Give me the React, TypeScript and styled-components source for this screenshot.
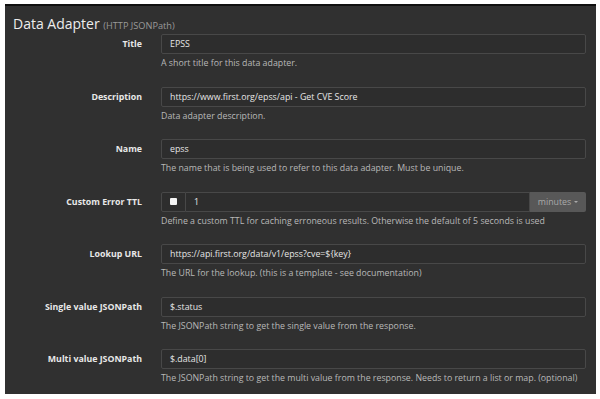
import React from "react";
import styled, { createGlobalStyle } from "styled-components";

interface Field {
  label: string;
  value: string;
  help: string;
}

const fields: Field[] = [
  { label: "Title", value: "EPSS", help: "A short title for this data adapter." },
  {
    label: "Description",
    value: "https://www.first.org/epss/api - Get CVE Score",
    help: "Data adapter description.",
  },
  {
    label: "Name",
    value: "epss",
    help: "The name that is being used to refer to this data adapter. Must be unique.",
  },
];

const lookupFields: Field[] = [
  {
    label: "Lookup URL",
    value: "https://api.first.org/data/v1/epss?cve=${key}",
    help: "The URL for the lookup. (this is a template - see documentation)",
  },
  {
    label: "Single value JSONPath",
    value: "$.status",
    help: "The JSONPath string to get the single value from the response.",
  },
  {
    label: "Multi value JSONPath",
    value: "$.data[0]",
    help: "The JSONPath string to get the multi value from the response. Needs to return a list or map. (optional)",
  },
];

const FieldRow = ({ field }: { field: Field }) => (
  <Row>
    <Label>{field.label}</Label>
    <Control>
      <Input>{field.value}</Input>
      <Help>{field.help}</Help>
    </Control>
  </Row>
);

export default function App() {
  return (
    <>
      <GlobalStyle />
      <Page>
        <Panel>
          <Heading>
            Data Adapter <small>(HTTP JSONPath)</small>
          </Heading>
          {fields.map((f) => (
            <FieldRow key={f.label} field={f} />
          ))}
          <Row>
            <Label>Custom Error TTL</Label>
            <Control>
              <InputGroup>
                <Addon>
                  <Check />
                </Addon>
                <GroupInput>1</GroupInput>
                <UnitButton>
                  minutes <Caret />
                </UnitButton>
              </InputGroup>
              <Help>
                Define a custom TTL for caching erroneous results. Otherwise the default of 5 seconds is used
              </Help>
            </Control>
          </Row>
          {lookupFields.map((f) => (
            <FieldRow key={f.label} field={f} />
          ))}
        </Panel>
      </Page>
    </>
  );
}

const GlobalStyle = createGlobalStyle`
  html, body {
    margin: 0;
    padding: 0;
    background: #ffffff;
  }
  body {
    font-family: "Open Sans", "Liberation Sans", sans-serif;
  }
`;

const Page = styled.div`
  width: 600px;
  height: 399px;
  padding: 4px 4px 0 5px;
  box-sizing: border-box;
  overflow: hidden;
`;

const Panel = styled.div`
  background: #303030;
  border-top: 2px solid #101010;
  padding: 0 10px 2px 8px;
  height: 390px;
  box-sizing: border-box;
`;

const Heading = styled.h2`
  margin: 0;
  padding-top: 9px;
  height: 28px;
  box-sizing: border-box;
  font-size: 14px;
  font-weight: 400;
  line-height: 17px;
  color: #ededed;

  small {
    font-size: 9.2px;
    color: #9a9a9a;
  }
`;

const Row = styled.div`
  display: grid;
  grid-template-columns: 129px 1fr;
  column-gap: 19px;
  height: 52.5px;
`;

const Label = styled.div`
  text-align: right;
  font-size: 8.8px;
  font-weight: 700;
  line-height: 20px;
  color: #e8e8e8;
`;

const Control = styled.div`
  display: flex;
  flex-direction: column;
`;

const Input = styled.div`
  height: 20px;
  box-sizing: border-box;
  border: 1px solid #484848;
  border-radius: 2px;
  background: #2d2d2d;
  padding: 0 8px;
  font-size: 8.8px;
  line-height: 18px;
  color: #e6e6e6;
  white-space: nowrap;
`;

const Help = styled.div`
  margin-top: 2px;
  font-size: 8.8px;
  line-height: 14px;
  color: #b8b8b8;
  white-space: nowrap;
`;

const InputGroup = styled.div`
  display: flex;
  height: 20px;
`;

const Addon = styled.div`
  width: 25px;
  box-sizing: border-box;
  border: 1px solid #484848;
  border-radius: 2px 0 0 2px;
  background: #2d2d2d;
  display: flex;
  align-items: center;
  justify-content: center;
`;

const Check = styled.span`
  width: 7px;
  height: 7px;
  background: #f4f4f4;
  border-radius: 1px;
`;

const GroupInput = styled(Input)`
  flex: 1;
  border-left: none;
  border-radius: 0;
`;

const UnitButton = styled.div`
  width: 56px;
  box-sizing: border-box;
  background: #585858;
  border-radius: 0 2px 2px 0;
  color: #a9a9a9;
  font-size: 8.8px;
  display: flex;
  align-items: center;
  justify-content: center;
  gap: 3px;
`;

const Caret = styled.span`
  width: 0;
  height: 0;
  border-left: 2.5px solid transparent;
  border-right: 2.5px solid transparent;
  border-top: 2.5px solid #a9a9a9;
`;
